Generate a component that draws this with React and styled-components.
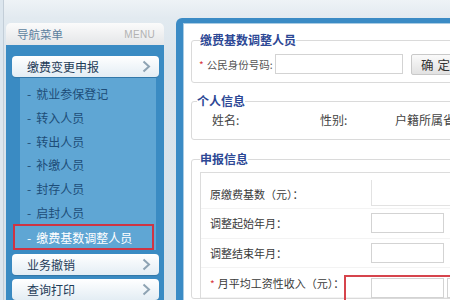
import React from 'react';
import styled, { createGlobalStyle } from 'styled-components';

const GlobalStyle = createGlobalStyle`
  html, body {
    margin: 0;
    padding: 0;
    width: 450px;
    height: 300px;
    overflow: hidden;
    background: #dce6ee;
    font-family: "Noto Sans CJK SC", "Noto Sans", sans-serif;
  }
`;

const Page = styled.div`
  position: relative;
  width: 450px;
  height: 300px;
  overflow: hidden;
  background: linear-gradient(to bottom, #eef3f6 0px, #e2eaf0 18px, #dae4ec 60px, #d8e3eb 100%);
  border-left: 1px solid #c3ced8;
  margin-left: 3px;
  box-sizing: border-box;
  display: flex;
  align-items: flex-start;
`;

const Sidebar = styled.aside`
  flex: none;
  width: 158px;
  margin: 23px 0 0 2px;
  height: 277px;
  display: flex;
  flex-direction: column;
`;

const SideHeader = styled.div`
  height: 27px;
  display: flex;
  align-items: center;
  justify-content: space-between;
  padding: 0 9px 0 11px;
  border-radius: 5px 5px 0 0;
  background: linear-gradient(to bottom, #fbfbfb, #e4e6e8);
  .title {
    font-size: 11.5px;
    color: #5d7f9e;
  }
  .menu {
    font-family: "Liberation Sans", Arial, sans-serif;
    font-size: 10px;
    color: #b2b2b2;
    letter-spacing: 0.3px;
  }
`;

const SideBody = styled.div`
  flex: 1;
  background: #3a8bc3;
  padding: 11px 5px 0 6px;
  display: flex;
  flex-direction: column;
  gap: 4px;
`;

const MenuButton = styled.div`
  height: 21px;
  flex: none;
  border-radius: 4px;
  background: linear-gradient(to bottom, #ffffff, #e3edf4);
  display: flex;
  align-items: center;
  justify-content: space-between;
  padding: 0 8px 0 15px;
  font-size: 12px;
  color: #1f3c58;
  box-shadow: 0 1px 1px rgba(0, 0, 0, 0.15);
  svg {
    flex: none;
  }
`;

const SubMenu = styled.ul`
  list-style: none;
  margin: -3px 3px 0 8px;
  padding: 3.5px 0 0 0;
  background: #5fa6d4;
`;

const SubItem = styled.li`
  height: ${p => (p.$active ? '26px' : '23.7px')};
  display: flex;
  align-items: center;
  font-size: 12px;
  color: ${p => (p.$active ? '#ffffff' : '#1d4d78')};
  padding-left: ${p => (p.$active ? '12px' : '7px')};
  margin: ${p => (p.$active ? '0 2px 0 -7px' : '0')};
  border: ${p => (p.$active ? '2px solid #cf3443' : 'none')};
  box-sizing: border-box;
  background: #5fa6d4;
  .dash {
    margin-right: 5px;
  }
`;

const Chevron = () => (
  <svg width="9" height="13" viewBox="0 0 9 13">
    <polyline points="1.5,1.5 7,6.5 1.5,11.5" fill="none" stroke="#8ea3b3" strokeWidth="2" />
  </svg>
);

const MainPanel = styled.main`
  flex: none;
  width: 300px;
  height: 290px;
  margin: 18px 0 0 12px;
  border-left: 7px solid #3b8bc5;
  border-top: 5px solid #3b8bc5;
  border-radius: 6px 0 0 0;
  background: #ffffff;
  box-shadow: inset 1px 1px 0 #a9cce4;
  padding: 1px 0 0 8px;
  box-sizing: border-box;
`;

const Group = styled.fieldset`
  margin: ${p => p.$top}px 0 0 0;
  padding: ${p => p.$pad};
  border: 1px solid #dadada;
  border-radius: 3px;
  width: 300px;
  box-sizing: border-box;
  legend {
    font-size: 12px;
    line-height: 16px;
    font-weight: bold;
    color: #2d4895;
    padding: 0;
    margin-left: ${p => p.$legendLeft}px;
  }
`;

const IdRow = styled.div`
  display: flex;
  align-items: center;
  height: 20px;
`;

const IdLabel = styled.label`
  width: 76px;
  font-size: 10.5px;
  color: #555555;
`;

const Star = styled.span`
  color: #d9363e;
  margin-right: 3px;
  font-size: 10px;
`;

const TextInput = styled.div`
  flex: none;
  width: ${p => p.$w}px;
  height: 20px;
  border: 1px solid #d3d3d3;
  box-sizing: border-box;
  background: #fff;
`;

const ConfirmButton = styled.div`
  width: 48px;
  height: 21px;
  margin-left: 8px;
  border: 1px solid #c9c9c9;
  border-radius: 2px;
  box-sizing: border-box;
  background: linear-gradient(to bottom, #fafafa, #e2e2e2);
  display: flex;
  align-items: center;
  padding-left: 9px;
  font-size: 12.5px;
  color: #333;
  letter-spacing: 4px;
  white-space: nowrap;
`;

const InfoRow = styled.div`
  display: grid;
  grid-template-columns: 108px 75px 1fr;
  padding-left: 13px;
  font-size: 12px;
  color: #444;
  height: 16px;
  line-height: 16px;
  white-space: nowrap;
`;

const FormTable = styled.div`
  margin: 5px 0 0 1px;
  border-top: 1px solid #dcdcdc;
  border-left: 1px solid #dcdcdc;
  padding-top: 6px;
`;

const FormRow = styled.div`
  display: flex;
  align-items: center;
  height: ${p => (p.$h ? p.$h : 29.5)}px;
  border-bottom: 1px solid #f3f3f3;
  box-sizing: border-box;
`;

const RowLabel = styled.div`
  width: 170px;
  flex: none;
  padding-left: 9px;
  box-sizing: border-box;
  font-size: 11px;
  color: #3a3a3a;
  white-space: nowrap;
`;

const ReadValue = styled.div`
  align-self: flex-start;
  margin-top: 1px;
  width: 120px;
  height: 25px;
  border-left: 1px solid #e2e2e2;
  border-bottom: 1px solid #e2e2e2;
`;

const MarkedCell = styled.div`
  flex: none;
  display: flex;
  align-items: flex-start;
  gap: 3px;
  margin: 7px 0 0 -27px;
  align-self: flex-start;
  height: 30px;
  padding: 1px 0 0 25px;
  border: 2px solid #d6444c;
  border-bottom: none;
  width: 140px;
`;

const subItems = ['就业参保登记', '转入人员', '转出人员', '补缴人员', '封存人员', '启封人员'];

export default function App() {
  return (
    <>
      <GlobalStyle />
      <Page>
        <Sidebar>
          <SideHeader>
            <span className="title">导航菜单</span>
            <span className="menu">MENU</span>
          </SideHeader>
          <SideBody>
            <MenuButton>
              <span>缴费变更申报</span>
              <Chevron />
            </MenuButton>
            <SubMenu>
              {subItems.map(t => (
                <SubItem key={t}>
                  <span className="dash">-</span>
                  {t}
                </SubItem>
              ))}
              <SubItem $active>
                <span className="dash">-</span>
                缴费基数调整人员
              </SubItem>
            </SubMenu>
            <MenuButton>
              <span>业务撤销</span>
              <Chevron />
            </MenuButton>
            <MenuButton>
              <span>查询打印</span>
              <Chevron />
            </MenuButton>
          </SideBody>
        </Sidebar>
        <MainPanel>
          <Group $top={8} $pad="6px 0 8px 7px" $legendLeft={1}>
            <legend>缴费基数调整人员</legend>
            <IdRow>
              <IdLabel>
                <Star>*</Star>公民身份号码:
              </IdLabel>
              <TextInput $w={128} />
              <ConfirmButton>确定</ConfirmButton>
            </IdRow>
          </Group>
          <Group $top={10} $pad="3px 0 11px 7px" $legendLeft={-2}>
            <legend>个人信息</legend>
            <InfoRow>
              <span>姓名:</span>
              <span>性别:</span>
              <span>户籍所属省市</span>
            </InfoRow>
          </Group>
          <Group $top={11} $pad="0 0 0 7px" $legendLeft={1}>
            <legend>申报信息</legend>
            <FormTable>
              <FormRow $h={30}>
                <RowLabel>原缴费基数（元）：</RowLabel>
                <ReadValue />
              </FormRow>
              <FormRow>
                <RowLabel>调整起始年月：</RowLabel>
                <TextInput $w={73} />
              </FormRow>
              <FormRow>
                <RowLabel>调整结束年月：</RowLabel>
                <TextInput $w={73} />
              </FormRow>
              <FormRow $h={30}>
                <RowLabel>
                  <Star>*</Star>月平均工资性收入（元）：
                </RowLabel>
                <MarkedCell>
                  <TextInput $w={73} />
                  <TextInput $w={20} />
                </MarkedCell>
              </FormRow>
            </FormTable>
          </Group>
        </MainPanel>
      </Page>
    </>
  );
}
